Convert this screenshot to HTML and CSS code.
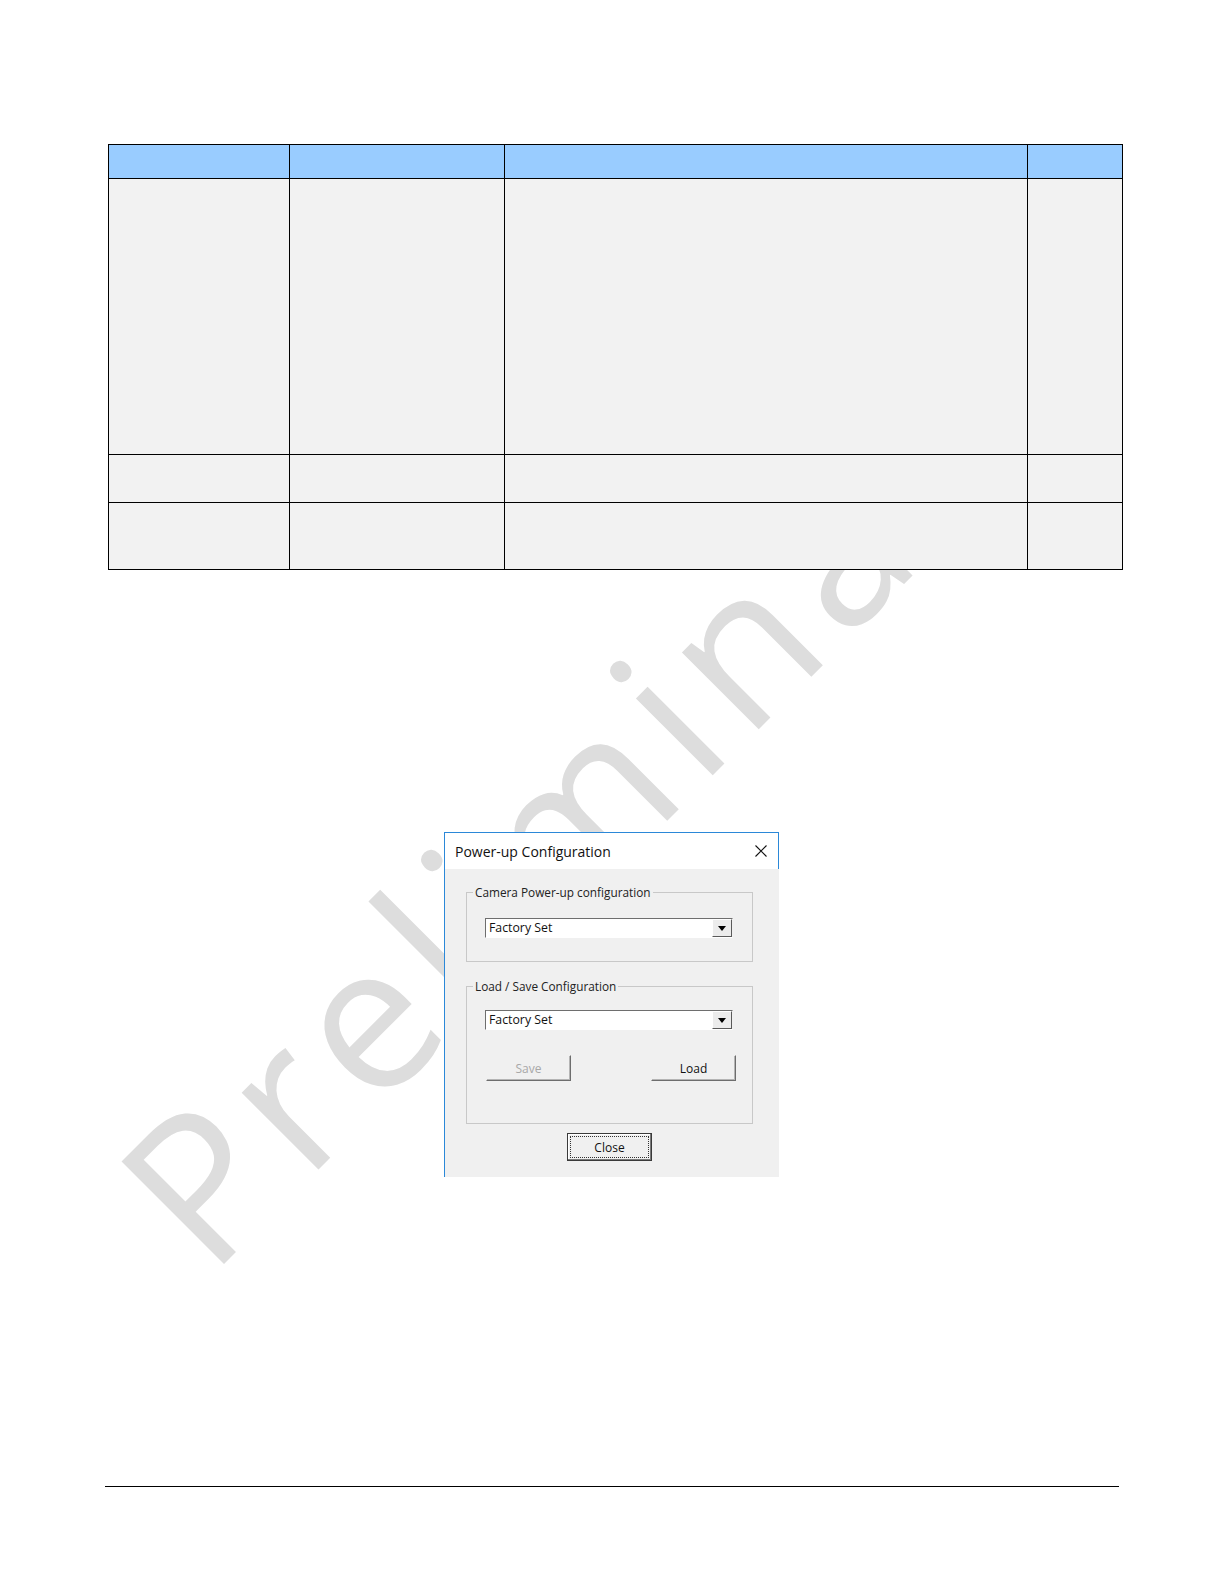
FILE: index.html
```html
<!DOCTYPE html>
<html lang="en">
<head>
  <meta charset="UTF-8">
  <title>Power-up Configuration</title>
  <link rel="stylesheet" href="styles.css">
</head>
<body>
  <div class="page">
    <!-- Watermark, drawn under the table and the dialog -->
    <svg class="watermark" width="1224" height="1584" viewBox="0 0 1224 1584">
      <text x="210" y="1278" transform="rotate(-45 210 1278)">Preliminary</text>
    </svg>

    <!-- Register table (empty cells) -->
    <div class="spec-table">
      <div class="cell head"></div>
      <div class="cell head"></div>
      <div class="cell head"></div>
      <div class="cell head"></div>

      <div class="cell"></div>
      <div class="cell"></div>
      <div class="cell"></div>
      <div class="cell"></div>

      <div class="cell"></div>
      <div class="cell"></div>
      <div class="cell"></div>
      <div class="cell"></div>

      <div class="cell"></div>
      <div class="cell"></div>
      <div class="cell"></div>
      <div class="cell"></div>
    </div>

    <!-- Power-up Configuration dialog -->
    <div class="dialog">
      <div class="titlebar">
        <span class="title">Power-up Configuration</span>
        <svg class="close-x" width="12" height="12" viewBox="0 0 12 12">
          <path d="M0.5 0.5L11.5 11.5M11.5 0.5L0.5 11.5" stroke="#111" stroke-width="1.1" fill="none"/>
        </svg>
      </div>

      <div class="dialog-body">
        <fieldset class="group group-powerup">
          <legend>Camera Power-up configuration</legend>
          <div class="combo">
            <span class="combo-value">Factory Set</span>
            <span class="combo-btn"><span class="arrow"></span></span>
          </div>
        </fieldset>

        <fieldset class="group group-loadsave">
          <legend>Load / Save Configuration</legend>
          <div class="combo">
            <span class="combo-value">Factory Set</span>
            <span class="combo-btn"><span class="arrow"></span></span>
          </div>
          <div class="btn-row">
            <button class="btn" disabled>Save</button>
            <button class="btn">Load</button>
          </div>
        </fieldset>

        <button class="btn btn-default">Close</button>
      </div>
    </div>

    <div class="footer-rule"></div>
  </div>
</body>
</html>
```

FILE: styles.css
```css
* {
  box-sizing: border-box;
}

body {
  margin: 0;
  background: #fff;
  font-family: "Open Sans", "Liberation Sans", sans-serif;
  color: #000;
}

.page {
  position: relative;
  width: 1224px;
  height: 1584px;
  padding-top: 144px;
}

.watermark {
  position: absolute;
  top: 0;
  left: 0;
  z-index: -1;
}

.watermark text {
  font-family: "Open Sans", sans-serif;
  font-size: 203px;
  letter-spacing: 14px;
  fill: #dddddd;
}

/* table */
.spec-table {
  display: grid;
  grid-template-columns: 181px 215px 523px 95px;
  grid-template-rows: 34px 276px 48px 67px;
  width: 1015px;
  margin-left: 108px;
  border-top: 1px solid #000;
  border-left: 1px solid #000;
}

.cell {
  background: #f2f2f2;
  border-right: 1px solid #000;
  border-bottom: 1px solid #000;
}

.cell.head {
  background: #99ccff;
}

/* dialog */
.dialog {
  width: 335px;
  margin: 262px 0 0 444px;
  background: #f0f0f0;
  border-top: 1px solid #2b88d8;
  border-left: 1px solid #2b88d8;
}

.titlebar {
  height: 36px;
  background: #fff;
  display: flex;
  align-items: center;
  justify-content: space-between;
  padding: 0 11px 0 10px;
  border-right: 1px solid #2b88d8;
}

.title {
  font-size: 14px;
  color: #111;
}

.dialog-body {
  display: flex;
  flex-direction: column;
  padding: 16px 26px 16px 21px;
}

.group {
  margin: 0;
  padding: 19px 19px 23px 18px;
  border: 1px solid #c8c8c8;
  min-width: 0;
}

.group legend {
  margin-left: -12px;
  padding: 0 2px;
  font-size: 11.8px;
  line-height: 14px;
  color: #222;
}

.group-loadsave {
  margin-top: 17px;
  padding-top: 17px;
  padding-bottom: 42px;
}

.combo {
  display: flex;
  height: 20px;
  background: #fff;
  border: 1px solid;
  border-color: #6e6e6e #f0f0f0 #fff #6e6e6e;
}

.combo-value {
  flex: 1;
  padding-left: 3px;
  font-size: 12.3px;
  line-height: 17px;
  color: #111;
}

.combo-btn {
  width: 20px;
  display: flex;
  align-items: center;
  justify-content: center;
  background: #ececec;
  border: 1px solid;
  border-color: #fff #5a5a5a #5a5a5a #fff;
}

.arrow {
  width: 0;
  height: 0;
  border-top: 5px solid #000;
  border-left: 4px solid transparent;
  border-right: 4px solid transparent;
}

.btn-row {
  display: flex;
  justify-content: space-between;
  margin: 25px -3px 0 1px;
}

.btn {
  width: 85px;
  height: 26px;
  padding: 0;
  font-family: "Open Sans", sans-serif;
  font-size: 12px;
  color: #111;
  background: #f0f0f0;
  border: 1px solid;
  border-color: #f0f0f0 #6d6d6d #6d6d6d #f0f0f0;
  box-shadow: inset -1px -1px 0 #b4b4b4;
}

.btn:disabled {
  color: #a8a8a8;
}

.btn-default {
  align-self: center;
  height: 28px;
  margin-top: 9px;
  border: 1px solid #3a3a3a;
  box-shadow: inset -1px -1px 0 #7a7a7a, inset 1px 1px 0 #fff;
  outline: 1px dotted #333;
  outline-offset: -4px;
}

.footer-rule {
  width: 1014px;
  margin: 309px 0 0 105px;
  border-top: 1px solid #000;
}
```
